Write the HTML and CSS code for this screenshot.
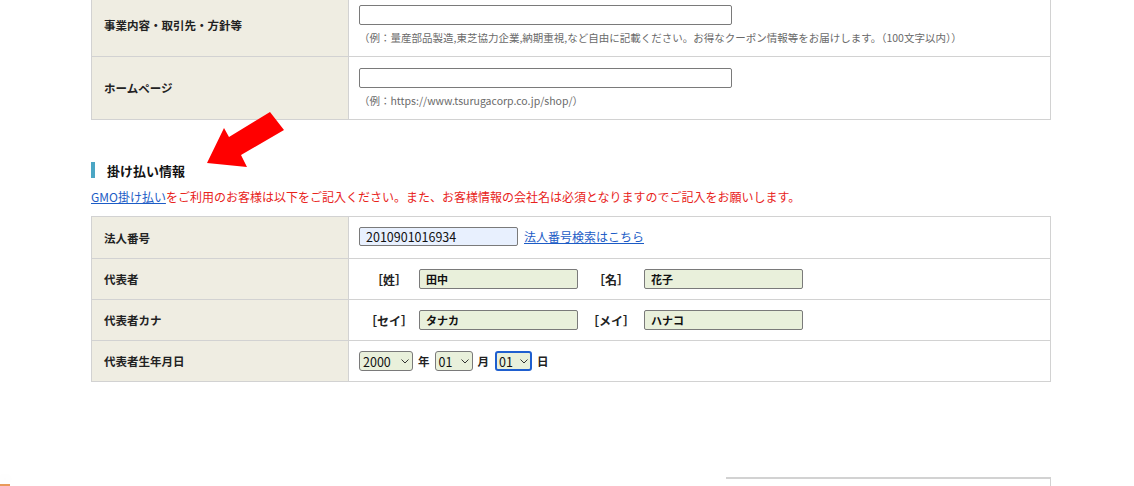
FILE: index.html
```html
<!DOCTYPE html>
<html lang="ja">
<head>
<meta charset="utf-8">
<title>掛け払い情報</title>
<link rel="stylesheet" href="styles.css">
</head>
<body>
<div class="page">
  <table class="form-table top-table">
    <tr>
      <th>事業内容・取引先・方針等</th>
      <td>
        <input type="text" class="text-wide">
        <p class="hint">（例：量産部品製造,東芝協力企業,納期重視,など自由に記載ください。お得なクーポン情報等をお届けします。（100文字以内））</p>
      </td>
    </tr>
    <tr>
      <th>ホームページ</th>
      <td>
        <input type="text" class="text-wide">
        <p class="hint">（例：https://www.tsurugacorp.co.jp/shop/）</p>
      </td>
    </tr>
  </table>

  <h2 class="section-title">掛け払い情報</h2>
  <p class="notice"><a href="#">GMO掛け払い</a>をご利用のお客様は以下をご記入ください。また、お客様情報の会社名は必須となりますのでご記入をお願いします。</p>

  <table class="form-table pay-table">
    <tr>
      <th>法人番号</th>
      <td>
        <div class="line">
          <input type="text" class="text-corp" value="2010901016934">
          <a href="#" class="search-link">法人番号検索はこちら</a>
        </div>
      </td>
    </tr>
    <tr>
      <th>代表者</th>
      <td>
        <div class="line">
          <span class="bracket b1">［姓］</span><input type="text" class="text-name" value="田中"><span class="bracket b2">［名］</span><input type="text" class="text-name" value="花子">
        </div>
      </td>
    </tr>
    <tr>
      <th>代表者カナ</th>
      <td>
        <div class="line">
          <span class="bracket b1">［セイ］</span><input type="text" class="text-name" value="タナカ"><span class="bracket b2">［メイ］</span><input type="text" class="text-name" value="ハナコ">
        </div>
      </td>
    </tr>
    <tr>
      <th>代表者生年月日</th>
      <td>
        <div class="line date-line">
          <span class="sel sel-year"><span class="sel-val">2000</span><svg viewBox="0 0 8 5" class="chev"><path d="M0.5 0.5 L4 4 L7.5 0.5" /></svg></span>
          <span class="unit">年</span>
          <span class="sel sel-md"><span class="sel-val">01</span><svg viewBox="0 0 8 5" class="chev"><path d="M0.5 0.5 L4 4 L7.5 0.5" /></svg></span>
          <span class="unit">月</span>
          <span class="sel sel-md sel-focus"><span class="sel-val">01</span><svg viewBox="0 0 8 5" class="chev"><path d="M0.5 0.5 L4 4 L7.5 0.5" /></svg></span>
          <span class="unit">日</span>
        </div>
      </td>
    </tr>
  </table>

  <div class="next-box"></div>
</div>

<svg class="arrow" width="90" height="60" viewBox="200 108 90 60">
  <polygon points="207,163 224,128 229,137 270,112 284,130 241,155 247,167" fill="#ff0000"/>
</svg>
<div class="corner-tab"></div>
</body>
</html>
```

FILE: styles.css
```css
html, body {
  margin: 0;
  padding: 0;
  background: #ffffff;
}
body {
  font-family: "Noto Sans CJK JP", "Noto Sans", sans-serif;
  color: #222222;
  overflow: hidden;
  height: 486px;
}
.page {
  width: 960px;
  margin: -7px 0 0 91px;
}
.form-table {
  width: 960px;
  border-collapse: collapse;
  border: 1px solid #d2d2d2;
}
.form-table th,
.form-table td {
  border: 1px solid #d2d2d2;
  vertical-align: middle;
}
.form-table th {
  width: 232px;
  background: #efede2;
  text-align: left;
  font-size: 11.5px;
  font-weight: bold;
  padding: 0 12px;
  color: #222222;
}
.form-table td {
  padding: 0 10px;
  background: #ffffff;
}
.top-table tr {
  height: 63px;
}
.top-table td {
  padding-top: 11px;
  padding-bottom: 10px;
}
input[type="text"] {
  box-sizing: border-box;
  height: 20px;
  border: 1px solid #7a7a7a;
  border-radius: 2px;
  font-family: "Noto Sans CJK JP", sans-serif;
  padding: 0 6px;
  margin: 0;
  color: #111111;
  display: block;
}
.text-wide {
  width: 373px;
  background: #ffffff;
}
.hint {
  margin: 5px 0 0;
  font-size: 10.5px;
  line-height: 16px;
  color: #6a6a6a;
}
.section-title {
  margin: 42px 0 0;
  height: 16px;
  border-left: 4px solid #4ba6c4;
  padding-left: 12px;
  font-size: 13px;
  line-height: 17px;
  font-weight: bold;
  color: #111111;
}
.notice {
  margin: 11px 0 0;
  font-size: 12px;
  line-height: 16px;
  color: #e8231b;
}
.notice a,
.search-link {
  color: #1c5cc6;
  text-decoration: underline;
}
.pay-table {
  margin-top: 11px;
}
.pay-table tr {
  height: 41px;
}
.pay-table tr:first-child {
  height: 42px;
}
.line {
  display: flex;
  align-items: center;
}
.text-corp {
  width: 159px;
  height: 19px !important;
  background: #e8f0fe;
  font-size: 12.5px;
  margin-top: -2px !important;
}
.search-link {
  font-size: 12px;
  margin-left: 6px;
  margin-top: -2px;
}
.bracket {
  display: inline-block;
  text-align: center;
  font-size: 12px;
  font-weight: bold;
  color: #222222;
}
.b1 { width: 60px; }
.b2 { width: 66px; }
.text-name {
  width: 159px;
  background: #e9f0db;
  font-size: 11px;
  font-weight: bold;
}
.date-line .unit {
  font-size: 11.5px;
  font-weight: bold;
  margin: 0 5px;
}
.sel {
  display: inline-flex;
  align-items: center;
  justify-content: space-between;
  box-sizing: border-box;
  height: 20px;
  border: 1px solid #7a7a7a;
  border-radius: 3px;
  background: #e9f0db;
  padding: 0 3px;
  font-size: 12.5px;
  color: #111111;
}
.sel-year { width: 54px; }
.sel-md { width: 38px; }
.sel-focus {
  border: 2px solid #1f5fcf;
  padding: 0 2px;
  width: 37px;
  margin-left: 1px;
}
.chev {
  width: 8px;
  height: 5px;
  fill: none;
  stroke: #333333;
  stroke-width: 1;
}
.next-box {
  margin: 95px 0 0 635px;
  width: 324px;
  height: 20px;
  border-top: 2px solid #d2d2d2;
  border-right: 1px solid #d2d2d2;
}
.arrow {
  position: absolute;
  left: 200px;
  top: 108px;
}
.corner-tab {
  position: fixed;
  left: 0;
  bottom: 0;
  width: 10px;
  height: 2px;
  background: #e89a5a;
  box-shadow: 0 -6px 8px rgba(0,0,0,0.06);
}
```
